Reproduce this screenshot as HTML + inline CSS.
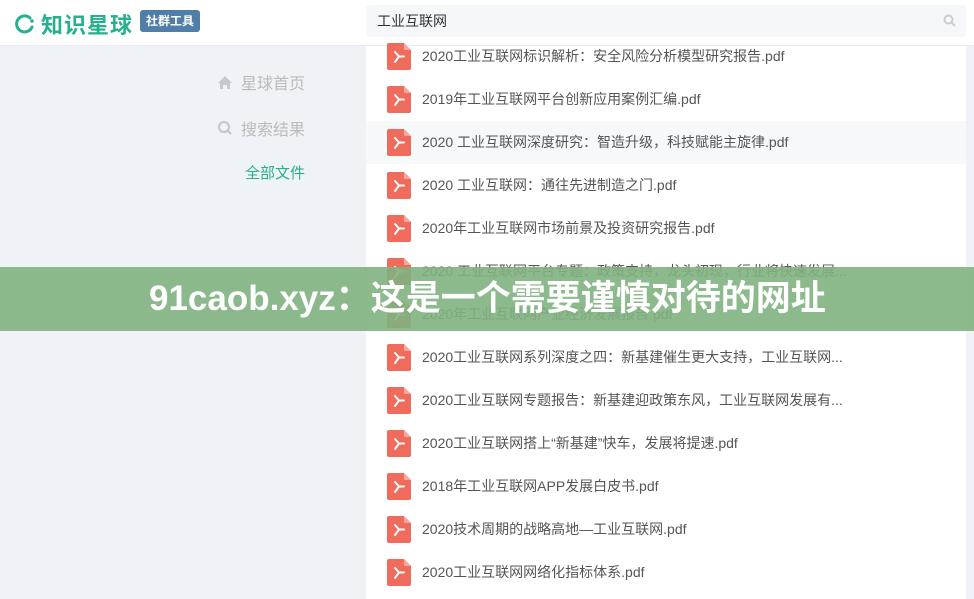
<!DOCTYPE html>
<html><head><meta charset="utf-8"><style>
*{margin:0;padding:0;box-sizing:border-box}
body{width:974px;height:599px;overflow:hidden;background:#eff2f7;font-family:"Liberation Sans","Noto Sans CJK SC",sans-serif;position:relative}
.hdr{position:absolute;left:0;top:0;width:974px;height:46px;background:#fff;border-bottom:1px solid #e8ebf0}
.logo{position:absolute;left:14px;top:8px;font-size:22px;color:#25b08e;font-weight:bold;letter-spacing:1px;display:flex;align-items:center}
.tag{position:absolute;left:140px;top:10px;width:60px;height:22px;background:#4f7fa8;color:#fff;border-radius:3px;font-size:12px;font-weight:bold;text-align:center;line-height:22px}
.search{position:absolute;left:366px;top:5px;width:600px;height:32px;background:#f5f7fa;border-radius:4px;font-size:14px;color:#333;line-height:32px;padding-left:11px}
.main{position:absolute;left:366px;top:46px;width:600px;height:553px;background:#fff}
.side{position:absolute;right:669px;font-size:16px;color:#bbb;display:flex;align-items:center;gap:8px}
.row{position:absolute;left:0;width:600px;height:43px}
.row svg{position:absolute;left:21px;top:8px}
.row span{position:absolute;left:56px;top:0;line-height:43px;font-size:14px;color:#555}
.ban{position:absolute;left:0;top:267px;width:974px;height:64px;background:rgba(128,178,128,0.9);color:#fff;font-size:35px;font-weight:bold;line-height:64px;padding-left:149px;white-space:nowrap}
</style></head><body>
<div class="hdr">
<div class="logo"><svg width="22" height="22" viewBox="0 0 22 22"><path d="M16 5 A8 8 0 1 0 18 14" fill="none" stroke="#25b08e" stroke-width="3" stroke-linecap="round"/><circle cx="18" cy="8" r="1.8" fill="#25b08e"/></svg><span style="margin-left:5px;font-weight:600">知识星球</span></div>
<div class="tag">社群工具</div>
<div class="search">工业互联网<svg style="position:absolute;right:10px;top:9px" width="13" height="13" viewBox="0 0 13 13"><circle cx="5.5" cy="5.5" r="4" fill="none" stroke="#ccc" stroke-width="2"/><path d="M8.5 8.5 L12 12" stroke="#ccc" stroke-width="2"/></svg></div>
</div>
<div class="side" style="top:70px"><svg width="16" height="15" viewBox="0 0 16 15"><path d="M8 1 L15 8 H13 V14 H10 V10 H6 V14 H3 V8 H1 Z" fill="#c5c8cc"/></svg>星球首页</div>
<div class="side" style="top:116px"><svg width="16" height="16" viewBox="0 0 16 16"><circle cx="7" cy="7" r="5" fill="none" stroke="#c5c8cc" stroke-width="2.2"/><path d="M10.5 10.5 L14 14" stroke="#c5c8cc" stroke-width="2.2"/></svg>搜索结果</div>
<div class="side" style="top:162px;color:#25b08e;font-size:15px">全部文件</div>
<div class="main">
<div class="row" style="top:-11px"><span>2020工业互联网标识解析：安全风险分析模型研究报告.pdf</span></div>
<div class="row" style="top:32px"><span>2019年工业互联网平台创新应用案例汇编.pdf</span></div>
<div class="row" style="top:75px;background:#f7f8fa"><span>2020 工业互联网深度研究：智造升级，科技赋能主旋律.pdf</span></div>
<div class="row" style="top:118px"><span>2020 工业互联网：通往先进制造之门.pdf</span></div>
<div class="row" style="top:161px"><span>2020年工业互联网市场前景及投资研究报告.pdf</span></div>
<div class="row" style="top:204px"><span>2020 工业互联网平台专题：政策支持，龙头初现，行业将快速发展...</span></div>
<div class="row" style="top:247px"><span>2020年工业互联网产业经济发展报告.pdf</span></div>
<div class="row" style="top:290px"><span>2020工业互联网系列深度之四：新基建催生更大支持，工业互联网...</span></div>
<div class="row" style="top:333px"><span>2020工业互联网专题报告：新基建迎政策东风，工业互联网发展有...</span></div>
<div class="row" style="top:376px"><span>2020工业互联网搭上“新基建”快车，发展将提速.pdf</span></div>
<div class="row" style="top:419px"><span>2018年工业互联网APP发展白皮书.pdf</span></div>
<div class="row" style="top:462px"><span>2020技术周期的战略高地—工业互联网.pdf</span></div>
<div class="row" style="top:505px"><span>2020工业互联网网络化指标体系.pdf</span></div>
</div>
<div class="ban">91caob.xyz：这是一个需要谨慎对待的网址</div>
<script>
document.querySelectorAll('.row').forEach(r=>{r.insertAdjacentHTML('afterbegin','<svg width="24" height="27" viewBox="0 0 24 27"><path d="M2 0 H17 L24 7 V25 Q24 27 22 27 H2 Q0 27 0 25 V2 Q0 0 2 0 Z" fill="#ef6b5b"/><path d="M17 0 V7 H24 Z" fill="#f6a89e"/><path d="M8 9 L12 13.5 L8 19 M12 13.5 L17 13.5" fill="none" stroke="#fff" stroke-width="2" stroke-linecap="round" stroke-linejoin="round"/></svg>')});
</script>
</body></html>
